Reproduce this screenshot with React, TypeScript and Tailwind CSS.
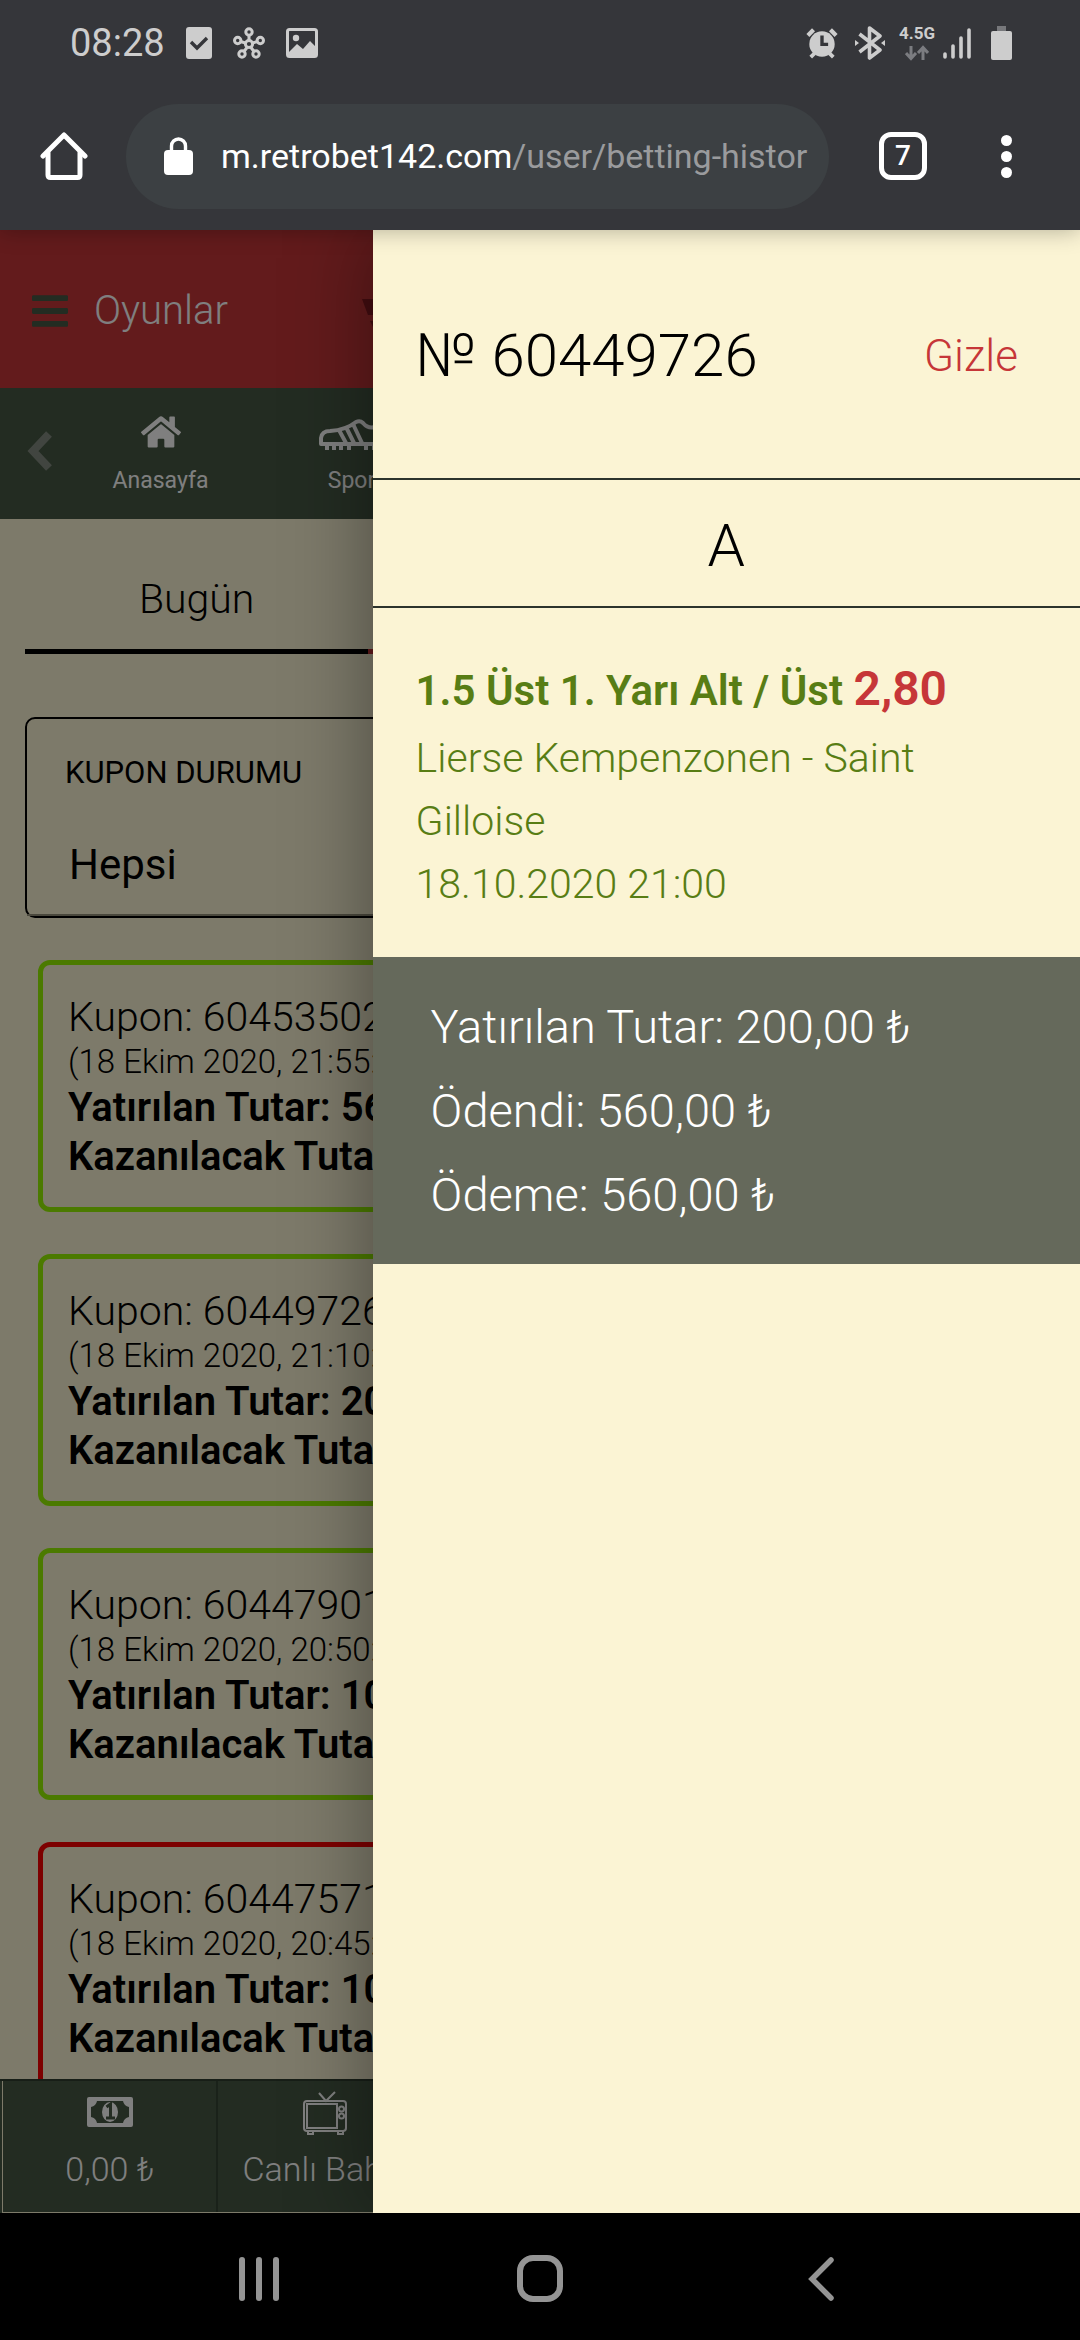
import React from "react";
import { FaBars, FaHome } from "react-icons/fa";

type Coupon = {
  id: string;
  date: string;
  stake: string;
  win: string;
  won: boolean;
};

const coupons: Coupon[] = [
  { id: "60453502", date: "18 Ekim 2020, 21:55:41", stake: "56,00 ₺", win: "112,00 ₺", won: true },
  { id: "60449726", date: "18 Ekim 2020, 21:10:22", stake: "200,00 ₺", win: "560,00 ₺", won: true },
  { id: "60447901", date: "18 Ekim 2020, 20:50:13", stake: "100,00 ₺", win: "185,00 ₺", won: true },
  { id: "60447571", date: "18 Ekim 2020, 20:45:37", stake: "100,00 ₺", win: "240,00 ₺", won: false },
];

const totals = [
  { label: "Yatırılan Tutar", value: "200,00 ₺" },
  { label: "Ödendi", value: "560,00 ₺" },
  { label: "Ödeme", value: "560,00 ₺" },
];

const HubIcon = () => (
  <svg viewBox="0 0 32 32" className="size-8" fill="none" stroke="currentColor" strokeWidth="3">
    <circle cx="16" cy="17" r="3.6" />
    <circle cx="16" cy="5" r="3.2" />
    <circle cx="4.7" cy="13.5" r="3.2" />
    <circle cx="27.3" cy="13.5" r="3.2" />
    <circle cx="9" cy="27" r="3.2" />
    <circle cx="23" cy="27" r="3.2" />
    <path d="M16 8v6M7.5 14.5l5 1.5M24.5 14.5l-5 1.5M11 24.5l3-4M21 24.5l-3-4" />
  </svg>
);

const AlarmIcon = () => (
  <svg viewBox="0 0 34 34" className="h-8 w-[34px]">
    <circle cx="17" cy="18" r="13.5" fill="currentColor" />
    <path d="M2 9l6-6M32 9l-6-6" stroke="currentColor" strokeWidth="4.5" />
    <path d="M9 28l-4 4M25 28l4 4" stroke="currentColor" strokeWidth="4" />
    <path d="M17 9v9.500h6.500" stroke="#35363a" strokeWidth="3.6" fill="none" />
  </svg>
);

const BluetoothIcon = () => (
  <svg viewBox="0 0 30 34" className="h-[34px] w-[30px]" fill="none" stroke="currentColor" strokeWidth="3.6">
    <path d="M4.500 8L25 24l-10.500 8V2L25 10 4.500 26" strokeLinejoin="round" />
    <path d="M0 14l4 3-4 3zM30 14l-4 3 4 3z" fill="currentColor" stroke="none" />
  </svg>
);

const StatusBar = () => (
  <div className="flex h-[86px] items-center justify-between pl-[70px] pr-[68px] text-[#cdcdcd]">
    <div className="flex items-center gap-[21px]">
      <span className="text-[38px] leading-none">08:28</span>
      <svg viewBox="0 0 26 32" className="h-8 w-[26px]">
        <rect width="26" height="32" rx="3" fill="currentColor" />
        <path d="M5 15l6 6 10-10" stroke="#35363a" strokeWidth="3.4" fill="none" />
      </svg>
      <HubIcon />
      <svg viewBox="0 0 32 30" className="h-[30px] w-8">
        <rect x="1.500" y="1.500" width="29" height="27" rx="2" fill="none" stroke="currentColor" strokeWidth="3" />
        <circle cx="10" cy="10" r="3.2" fill="currentColor" />
        <path d="M3 24l8-8 6 5 7-8 6 6v9H3z" fill="currentColor" />
      </svg>
    </div>
    <div className="flex items-center">
      <AlarmIcon />
      <span className="ml-4">
        <BluetoothIcon />
      </span>
      <div className="ml-3.5 flex flex-col items-center gap-1">
        <span className="text-[17px] font-bold leading-[15px]">4.5G</span>
        <svg viewBox="0 0 24 16" className="h-4 w-6" stroke="#7b7c80" strokeWidth="3" fill="none">
          <path d="M6 1v12M1 8l5 5.500L11 8M18 15V3M13 8l5-5.500L23 8" />
        </svg>
      </div>
      <svg viewBox="0 0 28 32" className="ml-2 h-8 w-7" stroke="currentColor" strokeWidth="3.6" strokeLinecap="round">
        <path d="M2 27v3M10 19v11M18 11v19M26 3v27" />
      </svg>
      <svg viewBox="0 0 21 34" className="ml-5 h-[34px] w-[21px]">
        <rect x="6" width="9" height="6" fill="#77787b" />
        <rect y="5" width="21" height="29" rx="2" fill="currentColor" />
      </svg>
    </div>
  </div>
);

const BrowserBar = () => (
  <div className="flex h-36 items-center pb-1 pl-10 pr-[68px] text-white">
    <button aria-label="Ana sayfa">
      <svg viewBox="0 0 48 48" className="size-12" fill="none" stroke="currentColor" strokeWidth="5" strokeLinejoin="round" strokeLinecap="round">
        <path d="M3 24L24 3l21 21" />
        <path d="M8 21v22q0 2.500 2.500 2.500h27q2.500 0 2.500-2.500V21" />
      </svg>
    </button>
    <div className="ml-[38px] flex h-[105px] min-w-0 flex-1 items-center rounded-full bg-[#3c4043] pl-[38px] pr-[21px]">
      <svg viewBox="0 0 29 38" className="h-[38px] w-[29px] shrink-0">
        <rect y="13" width="29" height="25" rx="4" fill="currentColor" />
        <path d="M7.500 15V9a7 7 0 0 1 14 0v6" fill="none" stroke="currentColor" strokeWidth="3.400" />
      </svg>
      <a href="#" className="ml-7 min-w-0 flex-1 overflow-hidden whitespace-nowrap text-[34px] leading-[44px] text-[#9a9b9d]">
        <span className="text-white">m.retrobet142.com</span>/user/betting-history
      </a>
    </div>
    <button className="ml-[50px] flex size-12 items-center justify-center rounded-xl border-[5px] border-white text-[28px] font-medium leading-none">
      7
    </button>
    <button aria-label="Menü" className="ml-[74px] flex flex-col gap-[5px]">
      <span className="size-[11px] rounded-full bg-white" />
      <span className="size-[11px] rounded-full bg-white" />
      <span className="size-[11px] rounded-full bg-white" />
    </button>
  </div>
);

const SiteHeader = () => (
  <header>
    <div className="flex h-[158px] items-center bg-[#c63638] pl-8">
      <button className="flex items-center gap-[26px] pt-1 text-[40px] font-light text-white">
        <FaBars className="h-[42px] w-9 text-[#465844]" />
        Oyunlar
      </button>
      <svg viewBox="0 0 120 40" className="ml-[134px] mt-5 h-10 w-[120px]" fill="#861a20">
        <path d="M0 0h120v16H6zM8 22h112v8H12z" />
      </svg>
    </div>
    <nav className="flex h-[131px] items-stretch bg-[#465844] text-[23px] text-white">
      <button aria-label="Geri" className="flex w-[65px] items-center pl-[27px] pb-1.5">
        <svg viewBox="0 0 26 40" className="h-10 w-[26px]" fill="none" stroke="#828b80" strokeWidth="8">
          <path d="M22 3L6 20l16 17" />
        </svg>
      </button>
      <a href="#" className="flex w-[191px] flex-col items-center pt-[26px]">
        <FaHome className="h-9 w-10" />
        <span className="mt-[17px] leading-7">Anasayfa</span>
      </a>
      <a href="#" className="flex w-[191px] flex-col items-center pt-[26px]">
        <svg viewBox="0 0 68 42" className="h-[42px] w-[68px]" fill="none" stroke="currentColor" strokeWidth="4">
          <path d="M3 30V24q1-7 9-7 16-1 26-9 4-2 7 1 5 6 12 4l6-3 3 20z" strokeLinejoin="round" />
          <path d="M21 16l7 13M28 13l8 16M35 10l9 19" />
          <path d="M9 30v6M16 30v6M23 30v6M31 30v6M48 30v6M56 30v6" />
        </svg>
        <span className="mt-[11px] leading-7">Spor</span>
      </a>
    </nav>
  </header>
);

const CouponCard = ({ coupon }: { coupon: Coupon }) => (
  <article
    className={`rounded-xl border-[5px] pb-[26px] pl-[25px] pt-7 font-light whitespace-nowrap ${
      coupon.won ? "border-[#96f400]" : "border-[#fa0000]"
    }`}
  >
    <h3 className="text-[41px] leading-[48px]">Kupon: {coupon.id}</h3>
    <p className="text-[33px] leading-[42px]">({coupon.date})</p>
    <p className="text-[40px] font-semibold leading-[49px]">Yatırılan Tutar: {coupon.stake}</p>
    <p className="text-[40px] font-semibold leading-[49px]">Kazanılacak Tutar: {coupon.win}</p>
  </article>
);

const BottomBar = () => (
  <footer className="absolute inset-x-0 bottom-0 border-t-2 border-[#2f3d2f] bg-[#465844] pl-0.5 text-[34px] font-light text-white">
    <div className="grid h-[132px] grid-cols-5 border-b border-l border-[#fbf4d4]">
      <a href="#" className="flex flex-col items-center border-r-2 border-[#354434] pt-4">
        <svg viewBox="0 0 46 30" className="h-[30px] w-[46px]">
          <path fillRule="evenodd" fill="currentColor" d="M2 0h42q2 0 2 2v26q0 2-2 2H2q-2 0-2-2V2Q0 0 2 0zM10 4q-1 5-6 6v10q5 1 6 6h26q1-5 6-6V10q-5-1-6-6z" />
          <ellipse cx="23" cy="15" rx="8" ry="10" fill="currentColor" />
          <path d="M19.500 10l4-3v13M19 21h9" fill="none" stroke="#465844" strokeWidth="3" />
        </svg>
        <span className="mt-[22px] leading-10">0,00 ₺</span>
      </a>
      <a href="#" className="flex flex-col items-center whitespace-nowrap border-r-2 border-[#354434] pt-2.5">
        <svg viewBox="0 0 44 44" className="size-11" fill="none" stroke="currentColor" strokeWidth="2">
          <rect x="1" y="10" width="42" height="30" rx="3" />
          <rect x="4" y="13" width="30" height="24" />
          <circle cx="38.500" cy="18" r="2.500" />
          <circle cx="38.500" cy="25" r="2.500" />
          <path d="M16 2l7 8L32 1M5 40h5v3H5zM35 40h5v3h-5z" />
        </svg>
        <span className="mt-3.5 leading-10">Canlı Bahis</span>
      </a>
    </div>
  </footer>
);

const CouponDrawer = () => (
  <aside className="absolute inset-y-0 right-0 w-[65.5%] bg-[#fbf4d4] text-black shadow-[0_0_80px_rgba(0,0,0,0.4)]">
    <div className="flex h-[250px] items-center justify-between border-b-2 border-[#2c332c] pl-[43px] pr-[62px] pt-1 font-light">
      <h2 className="text-[60px]">№ 60449726</h2>
      <button className="text-[44px] text-[#c63638]">Gizle</button>
    </div>
    <div className="flex h-32 items-center justify-center border-b-2 border-[#2c332c] pt-1.5 text-[60px] font-light">A</div>
    <section className="px-[43px] pb-[41px] pt-[46px] text-[41px] font-light leading-[63px] text-[#587d14]">
      <h3 className="pb-0.5 text-[42px] font-semibold leading-[69px]">
        1.5 Üst 1. Yarı Alt / Üst <span className="text-[48px] text-[#c63638]">2,80</span>
      </h3>
      <p>
        Lierse Kempenzonen - Saint
        <br />
        Gilloise
      </p>
      <p>18.10.2020 21:00</p>
    </section>
    <section className="bg-[#65695b] px-[58px] pb-[27px] pt-7 text-[47px] font-light leading-[84px] text-white">
      {totals.map((t) => (
        <p key={t.label}>
          {t.label}: {t.value}
        </p>
      ))}
    </section>
  </aside>
);

const SystemNav = () => (
  <nav className="grid h-[127px] shrink-0 grid-cols-3 items-center justify-items-center bg-black px-[11%] pt-1 text-[#949494]">
    <button aria-label="Son uygulamalar" className="flex gap-[11px]">
      <span className="h-11 w-1.5 rounded-full bg-current" />
      <span className="h-11 w-1.5 rounded-full bg-current" />
      <span className="h-11 w-1.5 rounded-full bg-current" />
    </button>
    <button aria-label="Ana ekran" className="h-[47px] w-[46px] rounded-2xl border-[6px] border-current" />
    <button aria-label="Geri">
      <svg viewBox="0 0 26 44" className="h-11 w-[26px]" fill="none" stroke="currentColor" strokeWidth="5.500" strokeLinecap="round">
        <path d="M23 3L4 22l19 19" />
      </svg>
    </button>
  </nav>
);

const App: React.FC = () => {
  return (
    <div className="flex h-screen flex-col overflow-hidden font-['Roboto',sans-serif]">
      <div className="relative z-10 shrink-0 bg-[#35363a] shadow-[0_0_22px_rgba(0,0,0,0.3)]">
        <StatusBar />
        <BrowserBar />
      </div>

      <div className="relative flex-1 overflow-hidden bg-[#fbf4d4]">
        <SiteHeader />
        <main className="px-[25px]">
          <div className="grid grid-cols-3 text-[41px] font-light">
            <button className="h-[135px] border-b-[5px] border-black pt-8">Bugün</button>
            <button className="border-b-[5px] border-[#c63638] pt-8">Dün</button>
            <button className="border-b-[5px] border-[#c63638] pt-8">Bu Hafta</button>
          </div>

          <div className="mt-[63px] rounded-[10px] border-2 border-black pt-9">
            <label htmlFor="status" className="block px-[38px] text-[31px] leading-[36px]">
              KUPON DURUMU
            </label>
            <select
              id="status"
              className="mt-9 block h-[89px] w-full appearance-none border-b-2 border-[#94907a] bg-transparent pb-3 pl-[42px] text-[42px]"
            >
              <option>Hepsi</option>
            </select>
          </div>

          <div className="mt-[42px] flex flex-col gap-[42px] px-[13px]">
            {coupons.map((c) => (
              <CouponCard key={c.id} coupon={c} />
            ))}
          </div>
        </main>
        <BottomBar />
        <div className="absolute inset-0 bg-black/50" />
        <CouponDrawer />
      </div>

      <SystemNav />
    </div>
  );
};

export default App;
